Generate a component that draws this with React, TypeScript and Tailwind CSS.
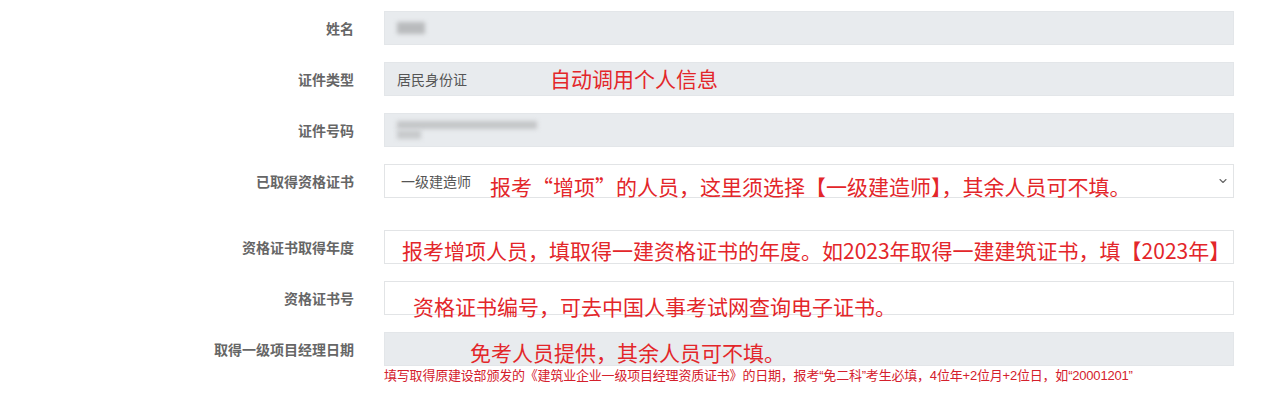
import { ChevronDown } from "lucide-react";

const cjk = { fontFamily: '"Noto Sans CJK SC", "Noto Sans", sans-serif' };
const help = { fontFamily: '"Liberation Sans", "Noto Sans CJK SC", sans-serif' };

function Label({ children }: { children: React.ReactNode }) {
  return (
    <div className="w-[354px] shrink-0 text-right text-[14px] font-bold text-[#666] leading-none">
      {children}
    </div>
  );
}

function Note({ children, className }: { children: React.ReactNode; className: string }) {
  return (
    <span
      className={`absolute whitespace-nowrap text-[21px] leading-[21px] text-[#e3262a] ${className}`}
    >
      {children}
    </span>
  );
}

export default function App() {
  return (
    <div className="w-[1276px] h-[416px] bg-white pt-[11px]" style={cjk}>
      {/* 姓名 */}
      <div className="flex items-center h-[34px]">
        <Label>姓名</Label>
        <div className="ml-[30px] w-[850px] h-[34px] bg-[#e8ebee] border border-[#e3e6e9] flex items-center pl-3">
          <div className="w-[28px] h-[12px] bg-[#b9bbbd] blur-[2px]" />
        </div>
      </div>

      {/* 证件类型 */}
      <div className="flex items-center h-[34px] mt-[17px]">
        <Label>证件类型</Label>
        <div className="relative ml-[30px] w-[850px] h-[34px] bg-[#e8ebee] border border-[#e3e6e9] flex items-center pl-3 text-[14px] text-[#555]">
          居民身份证
          <Note className="left-[165px] top-[5px]">自动调用个人信息</Note>
        </div>
      </div>

      {/* 证件号码 */}
      <div className="flex items-center h-[34px] mt-[17px]">
        <Label>证件号码</Label>
        <div className="ml-[30px] w-[850px] h-[34px] bg-[#e8ebee] border border-[#e3e6e9] flex items-center pl-3">
          <div className="flex flex-col gap-[1px]">
            <div className="w-[140px] h-[8px] bg-[#c4c6c8] blur-[2px]" />
            <div className="w-[24px] h-[9px] bg-[#c8cacc] blur-[2px]" />
          </div>
        </div>
      </div>

      {/* 已取得资格证书 */}
      <div className="flex items-center h-[34px] mt-[17px]">
        <Label>已取得资格证书</Label>
        <div className="relative ml-[30px] w-[850px] h-[34px] bg-white border border-[#e2e4e6] flex items-center pl-4 text-[14px] text-[#555]">
          一级建造师
          <ChevronDown className="absolute right-[4px] top-[10px]" size={12} strokeWidth={2.2} color="#666" />
          <Note className="left-[105px] top-[11px]">报考“增项”的人员，这里须选择【一级建造师】，其余人员可不填。</Note>
        </div>
      </div>

      {/* 资格证书取得年度 */}
      <div className="flex items-center h-[34px] mt-[32px]">
        <Label>资格证书取得年度</Label>
        <div className="relative ml-[30px] w-[850px] h-[34px] bg-white border border-[#e2e4e6]">
          <Note className="left-[17px] top-[9px]">报考增项人员，填取得一建资格证书的年度。如2023年取得一建建筑证书，填【2023年】</Note>
        </div>
      </div>

      {/* 资格证书号 */}
      <div className="flex items-center h-[34px] mt-[17px]">
        <Label>资格证书号</Label>
        <div className="relative ml-[30px] w-[850px] h-[34px] bg-white border border-[#e2e4e6]">
          <Note className="left-[28px] top-[14px]">资格证书编号，可去中国人事考试网查询电子证书。</Note>
        </div>
      </div>

      {/* 取得一级项目经理日期 */}
      <div className="flex items-center h-[34px] mt-[17px]">
        <Label>取得一级项目经理日期</Label>
        <div className="relative ml-[30px] w-[850px] h-[34px] bg-[#e8ebee] border border-[#e3e6e9]">
          <Note className="left-[85px] top-[9px]">免考人员提供，其余人员可不填。</Note>
        </div>
      </div>
      <div className="ml-[384px] mt-[2px] text-[13px] leading-[16px] tracking-[-0.2px] text-[#d4202c]" style={help}>
        填写取得原建设部颁发的《建筑业企业一级项目经理资质证书》的日期，报考“免二科”考生必填，4位年+2位月+2位日，如“20001201”
      </div>
    </div>
  );
}
